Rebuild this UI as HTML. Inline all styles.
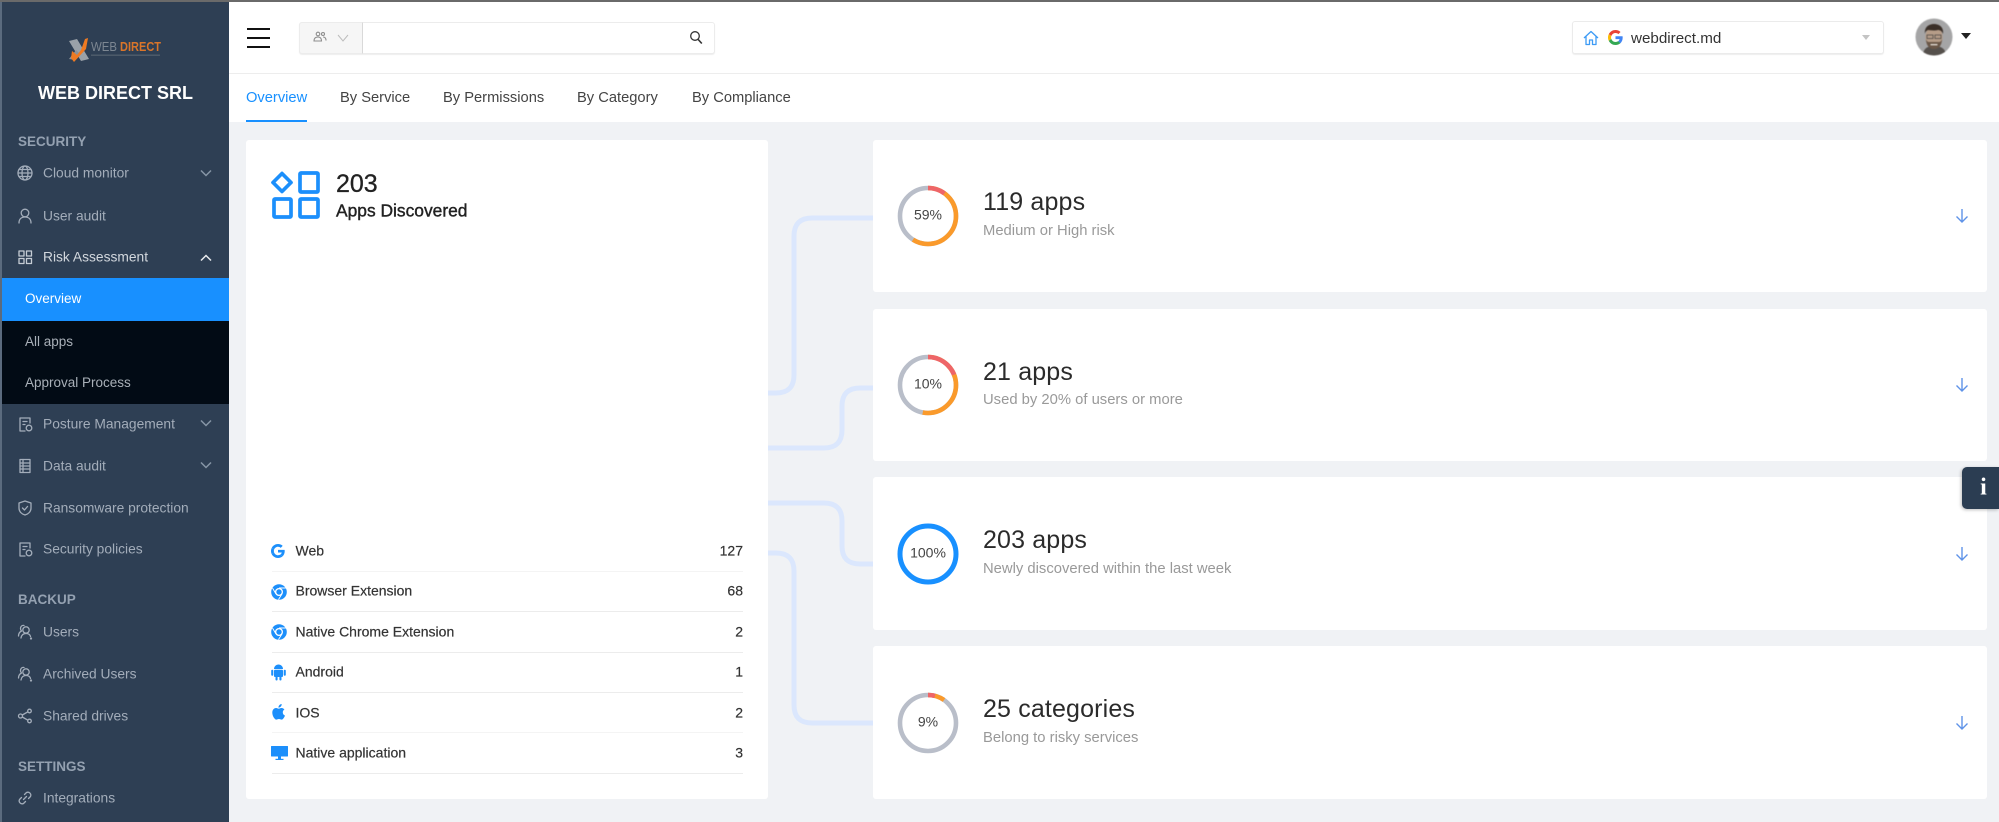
<!DOCTYPE html>
<html lang="en">
<head>
<meta charset="utf-8">
<title>Web Direct SRL</title>
<style>
*{box-sizing:border-box}
html{margin:0;padding:0;background:#f0f2f5}
body{margin:0;padding:0;width:1999px;height:822px;overflow:hidden;position:relative;background:#f0f2f5;font-family:"Liberation Sans",sans-serif;color:#333;filter:blur(.35px)}
.a{position:absolute}
.t{position:absolute;transform:translateY(-50%);white-space:nowrap;line-height:1.2}
#side{left:0;top:0;width:229px;height:822px;background:#2e3f54}
.g{left:18px;font-size:13.5px;font-weight:bold;color:#94a1b1;margin-top:.6px}
.m{left:43px;font-size:13.8px;color:#a3adba;margin-top:.6px}
.i{position:absolute;left:16px;width:18px;height:18px;fill:none;stroke:#a3adba;stroke-width:1.3;stroke-linecap:round;stroke-linejoin:round;transform:translateY(-50%)}
.c{position:absolute;left:200px;width:12px;height:8px;fill:none;stroke:#8695a6;stroke-width:1.5;transform:translateY(-50%)}
.tab{top:99px;font-size:14.7px;color:#444}
.card{position:absolute;background:#fff;border-radius:3px}
.rc{left:872.500px;width:1114.500px;height:153px}
.h{left:983px;font-size:25px;color:#2b2b2b;letter-spacing:.15px}
.s{left:983px;font-size:14.800px;color:#999;margin-top:2px}
.d{position:absolute;left:896px;width:64px;height:64px;transform:translateY(-50%) rotate(-90deg)}
.d circle{fill:none;stroke-width:4.6}
.p{left:888px;width:80px;text-align:center;font-size:14px;color:#444}
.l{left:295.5px;font-size:14px;color:#333;-webkit-text-stroke:.2px #333}
.n{right:1256px;font-size:14px;color:#333;-webkit-text-stroke:.2px #333}
.dv{left:272px;width:471px;height:1px;background:#ececec}
.ar{position:absolute;left:1955px;width:14px;height:16px;fill:none;stroke:#5f93e8;stroke-width:1.4;transform:translateY(-50%)}
.ic{position:absolute;fill:#1c8ffb;transform:translateY(-50%)}
</style>
</head>
<body>
<!-- top edge -->
<div class="a" style="left:0;top:0;width:1999px;height:2px;background:#6a6a6a;z-index:5"></div>
<!-- header -->
<div class="a" style="left:229px;top:0;width:1770px;height:122px;background:#fff"></div>
<div class="a" style="left:229px;top:73px;width:1770px;height:1px;background:#ededed"></div>

<!-- sidebar -->
<div id="side" class="a"></div>
<div class="a" style="left:0;top:0;width:1.500px;height:822px;background:#5b6b7e"></div>
<svg class="a" style="left:68px;top:36px" width="24" height="28" viewBox="0 0 24 28">
<polygon points="1,5 9,3 21,23 13,25" fill="#9aa1a8"/>
<polygon points="1,23 8,14 12,18 7,24" fill="#8a9198"/>
<polygon points="17,3 20,2 18,13 6,26 3,22 4,15 9,19 13,14" fill="#ee7a22"/>
</svg>
<svg class="a" style="left:90px;top:38px" width="72" height="22" viewBox="0 0 72 22">
<text x="1" y="13" font-family="Liberation Sans" font-size="13" fill="#7d8792" textLength="26" lengthAdjust="spacingAndGlyphs">WEB</text>
<text x="30" y="13" font-family="Liberation Sans" font-size="13" font-weight="bold" fill="#d9752a" textLength="41" lengthAdjust="spacingAndGlyphs">DIRECT</text>
<rect x="1" y="16.500" width="69" height="1.400" fill="#4f5d6c"/>
</svg>
<div class="t" style="left:38px;top:94px;font-size:18px;font-weight:bold;color:#fff">WEB DIRECT SRL</div>

<div class="t g" style="top:141px">SECURITY</div>
<svg class="i" style="top:173px" viewBox="0 0 18 18"><circle cx="9" cy="9" r="7"/><ellipse cx="9" cy="9" rx="3" ry="7"/><path d="M2 9h14M3 5.500h12M3 12.500h12"/></svg>
<div class="t m" style="top:173px">Cloud monitor</div>
<svg class="c" style="top:173px" viewBox="0 0 12 8"><path d="M1 1.500l5 5 5-5"/></svg>
<svg class="i" style="top:216px" viewBox="0 0 18 18"><circle cx="9" cy="6" r="3.800"/><path d="M3 16c0-4 2.500-6 6-6s6 2 6 6"/></svg>
<div class="t m" style="top:216px">User audit</div>
<svg class="i" style="top:257px;stroke:#c5ccd4" viewBox="0 0 18 18"><rect x="3" y="3" width="5" height="5"/><rect x="10.500" y="3" width="5" height="5"/><rect x="3" y="10.500" width="5" height="5"/><rect x="10.500" y="10.500" width="5" height="5"/></svg>
<div class="t m" style="top:257px;color:#d3d8de">Risk Assessment</div>
<svg class="c" style="top:258px;stroke:#e8ebee" viewBox="0 0 12 8"><path d="M1 6.500l5-5 5 5"/></svg>

<div class="a" style="left:2px;top:321px;width:227px;height:83px;background:#020b15"></div>
<div class="a" style="left:2px;top:278px;width:227px;height:43px;background:#1890ff"></div>
<div class="t" style="left:25px;top:299px;font-size:13.5px;color:#fff">Overview</div>
<div class="t" style="left:25px;top:341.500px;font-size:13.5px;color:#a9b0b8">All apps</div>
<div class="t" style="left:25px;top:383px;font-size:13.5px;color:#a9b0b8">Approval Process</div>

<svg class="i" style="top:424px" viewBox="0 0 18 18"><path d="M14 8V3H4v13h5"/><path d="M7 6.500h4M7 9.500h2"/><circle cx="13" cy="13" r="2.800"/></svg>
<div class="t m" style="top:424px">Posture Management</div>
<svg class="c" style="top:423px" viewBox="0 0 12 8"><path d="M1 1.500l5 5 5-5"/></svg>
<svg class="i" style="top:466px" viewBox="0 0 18 18"><rect x="4" y="2.500" width="10" height="13"/><path d="M4 6h10M4 9h10M4 12h10M7 2.500v13"/></svg>
<div class="t m" style="top:466px">Data audit</div>
<svg class="c" style="top:465px" viewBox="0 0 12 8"><path d="M1 1.500l5 5 5-5"/></svg>
<svg class="i" style="top:508px" viewBox="0 0 18 18"><path d="M9 2l6 2v5c0 3.500-2.500 6-6 7-3.500-1-6-3.500-6-7V4z"/><path d="M6.500 9l2 2 3-3.500"/></svg>
<div class="t m" style="top:508px">Ransomware protection</div>
<svg class="i" style="top:549px" viewBox="0 0 18 18"><path d="M14 8V3H4v13h5"/><path d="M7 6.500h4M7 9.500h2"/><circle cx="13" cy="13" r="2.800"/></svg>
<div class="t m" style="top:549px">Security policies</div>

<div class="t g" style="top:599px">BACKUP</div>
<svg class="i" style="top:632px" viewBox="0 0 18 18"><circle cx="10" cy="7" r="3.200"/><path d="M5 15c.5-3 2.500-4.500 5-4.500s4 1 4.500 3"/><path d="M8 2.500c-2-.5-3.500 1-3.500 3 0 1 .5 2 1 2.500-2 1-3 3-3 5"/><circle cx="15" cy="15.500" r=".5"/></svg>
<div class="t m" style="top:632px">Users</div>
<svg class="i" style="top:674px" viewBox="0 0 18 18"><circle cx="10" cy="7" r="3.200"/><path d="M5 15c.5-3 2.500-4.500 5-4.500s4 1 4.500 3"/><path d="M8 2.500c-2-.5-3.500 1-3.500 3 0 1 .5 2 1 2.500-2 1-3 3-3 5"/><circle cx="15" cy="15.500" r=".5"/></svg>
<div class="t m" style="top:674px">Archived Users</div>
<svg class="i" style="top:716px" viewBox="0 0 18 18"><circle cx="4.500" cy="9" r="2"/><circle cx="13.500" cy="4" r="1.800"/><circle cx="13.500" cy="14" r="1.800"/><path d="M6.300 8l5.600-3.200M6.300 10l5.600 3.200"/></svg>
<div class="t m" style="top:716px">Shared drives</div>

<div class="t g" style="top:766px">SETTINGS</div>
<svg class="i" style="top:798px" viewBox="0 0 18 18"><path d="M7.500 10.500l3-3"/><path d="M8.500 5.500l2-2a3 3 0 0 1 4 4l-2 2"/><path d="M9.500 12.500l-2 2a3 3 0 0 1-4-4l2-2"/></svg>
<div class="t m" style="top:798px">Integrations</div>

<!-- hamburger -->
<div class="a" style="left:247px;top:27.500px;width:23px;height:2px;background:#111"></div>
<div class="a" style="left:247px;top:36.500px;width:23px;height:2px;background:#111"></div>
<div class="a" style="left:247px;top:45.500px;width:23px;height:2px;background:#111"></div>

<!-- search -->
<div class="a" style="left:299px;top:22px;width:416px;height:32px;background:#fff;border:1px solid #ececec;border-radius:3px;box-shadow:0 1px 1px #eee"></div>
<div class="a" style="left:299px;top:22px;width:64px;height:32px;background:#f6f6f6;border:1px solid #ececec;border-right:1px solid #d9d9d9;border-radius:3px 0 0 3px"></div>
<svg class="a" style="left:313px;top:31px" width="14" height="12" viewBox="0 0 14 12" fill="none" stroke="#8d8d8d" stroke-width="1.100"><circle cx="5" cy="3" r="1.800"/><circle cx="10" cy="3" r="1.500"/><path d="M1 10c0-2.500 1.500-4 4-4s3.500 1.500 3.500 4zM10 6c2 0 3 1.500 3 3.500"/></svg>
<svg class="a" style="left:337px;top:34px" width="12" height="8" viewBox="0 0 12 8" fill="none" stroke="#bdbdbd" stroke-width="1"><path d="M1 1l5 6 5-6"/></svg>
<svg class="a" style="left:689px;top:30px" width="14" height="15" viewBox="0 0 14 15" fill="none" stroke="#333" stroke-width="1.300"><circle cx="6" cy="6" r="4.300"/><path d="M9.200 9.500l3.600 4" stroke-width="1.600"/></svg>

<!-- domain select -->
<div class="a" style="left:1572px;top:21px;width:312px;height:33px;background:#fff;border:1px solid #ebebeb;border-radius:3px;box-shadow:0 1px 1px #eee"></div>
<svg class="a" style="left:1583px;top:30px" width="16" height="16" viewBox="0 0 16 16" fill="none" stroke="#3d9bf5" stroke-width="1.300" stroke-linejoin="round"><path d="M1 8l7-6.500L15 8M3 6.500V14.500h3.500V10h3v4.500H13V6.500"/></svg>
<svg class="a" style="left:1608px;top:30px" width="15" height="15" viewBox="0 0 48 48"><path fill="#EA4335" d="M24 9.500c3.540 0 6.710 1.220 9.210 3.600l6.850-6.850C35.900 2.380 30.470 0 24 0 14.620 0 6.510 5.380 2.560 13.220l7.980 6.190C12.430 13.720 17.740 9.500 24 9.500z"/><path fill="#4285F4" d="M46.980 24.550c0-1.570-.15-3.090-.38-4.550H24v9.020h12.940c-.58 2.960-2.260 5.480-4.780 7.180l7.730 6c4.510-4.180 7.090-10.360 7.090-17.650z"/><path fill="#FBBC05" d="M10.530 28.590c-.48-1.450-.76-2.990-.76-4.590s.27-3.140.76-4.590l-7.980-6.190C.92 16.460 0 20.120 0 24c0 3.880.92 7.540 2.560 10.780l7.970-6.190z"/><path fill="#34A853" d="M24 48c6.480 0 11.930-2.130 15.890-5.810l-7.730-6c-2.150 1.450-4.920 2.300-8.160 2.300-6.260 0-11.570-4.220-13.470-9.910l-7.980 6.190C6.510 42.620 14.620 48 24 48z"/></svg>
<div class="t" style="left:1631px;top:38.500px;font-size:15.200px;color:#333">webdirect.md</div>
<div class="a" style="left:1862px;top:35px;width:0;height:0;border-left:4.500px solid transparent;border-right:4.500px solid transparent;border-top:5px solid #c4c4c4"></div>

<!-- avatar -->
<svg class="a" style="left:1915px;top:18px;filter:blur(.6px)" width="38" height="38" viewBox="0 0 38 38">
<defs><clipPath id="cp"><circle cx="19" cy="19" r="18.500"/></clipPath></defs>
<g clip-path="url(#cp)">
<rect width="38" height="38" fill="#a5a5a6"/>
<path d="M8 38c0-8 5-10 11-10s12 2 12 10z" fill="#55504c"/>
<ellipse cx="19" cy="19" rx="8.500" ry="11" fill="#b69d88"/>
<path d="M10 16c-1-7 4-10 9-10s10 3 9 10c-1-3-3-4-5-4-4 1-8 0-10 0-2 1-3 2-3 4z" fill="#3a2f28"/>
<path d="M11 21c1 3 2 3 4 3h8c2 0 3 0 4-3 0 6-3 10-8 10s-8-4-8-10z" fill="#6a5748"/>
<rect x="12" y="17" width="6" height="3.500" fill="none" stroke="#3f3f3f" stroke-width=".7"/>
<rect x="20" y="17" width="6" height="3.500" fill="none" stroke="#3f3f3f" stroke-width=".7"/>
<rect x="15.500" y="26" width="7" height="1.300" fill="#e8e2da"/>
</g></svg>
<div class="a" style="left:1961px;top:33px;width:0;height:0;border-left:5px solid transparent;border-right:5px solid transparent;border-top:6px solid #222"></div>

<!-- tabs -->
<div class="t tab" style="left:246px;color:#1890ff">Overview</div>
<div class="t tab" style="left:340px">By Service</div>
<div class="t tab" style="left:443px">By Permissions</div>
<div class="t tab" style="left:577px">By Category</div>
<div class="t tab" style="left:692px">By Compliance</div>
<div class="a" style="left:246px;top:120px;width:61px;height:2px;background:#1890ff"></div>

<!-- connectors -->
<svg class="a" style="left:768px;top:200px" width="105" height="540" viewBox="768 200 105 540" fill="none" stroke="#dbe7fd" stroke-width="5">
<path d="M873 218H812Q794 218 794 236V375Q794 393 776 393H768"/>
<path d="M873 388H860Q842 388 842 406V430Q842 448 824 448H768"/>
<path d="M768 503H824Q842 503 842 521V546Q842 564 860 564H873"/>
<path d="M768 553H776Q794 553 794 571V705Q794 723 812 723H873"/>
</svg>

<!-- left card -->
<div class="card" style="left:246px;top:140px;width:522px;height:659px"></div>
<svg class="a" style="left:269px;top:169px" width="52" height="52" viewBox="0 0 52 52" fill="none" stroke="#1c8ffb" stroke-width="3.700" stroke-linejoin="round">
<path d="M13 4.500L22 13.500L13 22.500L4 13.500Z"/>
<rect x="31" y="4" width="18" height="19" rx="1"/>
<rect x="5" y="30" width="17" height="18" rx="1"/>
<rect x="31" y="30" width="18" height="18" rx="1"/>
</svg>
<div class="t" style="left:336px;top:183.500px;font-size:25px;color:#222;-webkit-text-stroke:.3px #222">203</div>
<div class="t" style="left:336px;top:210.500px;font-size:17.400px;color:#222;-webkit-text-stroke:.4px #222">Apps Discovered</div>

<svg class="ic" style="left:271px;top:551px" width="14" height="15" viewBox="0 0 48 48"><path d="M24 9.500c3.540 0 6.710 1.220 9.210 3.600l6.850-6.850C35.900 2.380 30.470 0 24 0 14.620 0 6.510 5.380 2.560 13.220l7.980 6.190C12.430 13.720 17.740 9.500 24 9.500z"/><path d="M46.980 24.550c0-1.570-.15-3.090-.38-4.550H24v9.020h12.940c-.58 2.960-2.260 5.480-4.780 7.180l7.730 6c4.510-4.180 7.090-10.360 7.090-17.650z"/><path d="M10.530 28.590c-.48-1.450-.76-2.990-.76-4.590s.27-3.140.76-4.590l-7.980-6.190C.92 16.460 0 20.120 0 24c0 3.880.92 7.540 2.560 10.780l7.970-6.190z"/><path d="M24 48c6.480 0 11.930-2.130 15.890-5.810l-7.730-6c-2.150 1.450-4.920 2.300-8.160 2.300-6.260 0-11.570-4.220-13.470-9.910l-7.980 6.190C6.510 42.620 14.620 48 24 48z"/></svg>
<div class="t l" style="top:551px">Web</div><div class="t n" style="top:551px">127</div>
<div class="a dv" style="top:571px;background:#f4f4f4"></div>

<svg class="ic" style="left:271px;top:592px" width="16" height="16" viewBox="0 0 16 16"><circle cx="8" cy="8" r="7.800"/><circle cx="8" cy="8" r="4" fill="#fff"/><circle cx="8" cy="8" r="2.700"/><path d="M8 4H15M5 10L1.500 4M11 10L7.500 15.500" stroke="#fff" stroke-width=".9" fill="none"/></svg>
<div class="t l" style="top:591px">Browser Extension</div><div class="t n" style="top:591px">68</div>
<div class="a dv" style="top:611px"></div>

<svg class="ic" style="left:271px;top:632px" width="16" height="16" viewBox="0 0 16 16"><circle cx="8" cy="8" r="7.800"/><circle cx="8" cy="8" r="4" fill="#fff"/><circle cx="8" cy="8" r="2.700"/><path d="M8 4H15M5 10L1.500 4M11 10L7.500 15.500" stroke="#fff" stroke-width=".9" fill="none"/></svg>
<div class="t l" style="top:632px">Native Chrome Extension</div><div class="t n" style="top:632px">2</div>
<div class="a dv" style="top:652px"></div>

<svg class="ic" style="left:271px;top:672px" width="15" height="17" viewBox="0 0 15 17"><path d="M3 5.500C3 3 5 1 7.500 1S12 3 12 5.500z"/><rect x="3" y="6.200" width="9" height="7.300" rx="1"/><rect x=".2" y="6.200" width="2.100" height="6" rx="1"/><rect x="12.700" y="6.200" width="2.100" height="6" rx="1"/><rect x="4.500" y="13" width="2.100" height="4" rx="1"/><rect x="8.400" y="13" width="2.100" height="4" rx="1"/></svg>
<div class="t l" style="top:672px">Android</div><div class="t n" style="top:672px">1</div>
<div class="a dv" style="top:692px"></div>

<svg class="ic" style="left:270px;top:712px" width="16" height="17" viewBox="3 1 19 22"><path d="M18.700 12.600c0-2.500 2-3.700 2.100-3.800-1.200-1.700-3-1.900-3.600-2-1.500-.2-3 .9-3.800.9s-2-.9-3.300-.9c-1.700 0-3.300 1-4.100 2.500-1.800 3-.5 7.600 1.200 10.100.9 1.200 1.900 2.600 3.200 2.500 1.300 0 1.800-.8 3.300-.8s2 .8 3.300.8c1.400 0 2.200-1.200 3.100-2.500 1-1.400 1.400-2.800 1.400-2.900-.1 0-2.700-1-2.800-3.900zM16.200 4.900c.7-.8 1.200-2 1-3.200-1 0-2.300.7-3 1.500-.7.700-1.200 1.900-1.100 3.100 1.200.1 2.400-.6 3.100-1.400z"/></svg>
<div class="t l" style="top:712.500px">IOS</div><div class="t n" style="top:712.500px">2</div>
<div class="a dv" style="top:732px;background:#f4f4f4"></div>

<svg class="ic" style="left:271px;top:753px" width="17" height="14" viewBox="0 0 17 14"><rect width="17" height="10.500" rx=".5"/><rect x="7" y="10" width="3" height="3"/><rect x="4.500" y="12.800" width="8" height="1.200"/></svg>
<div class="t l" style="top:753px">Native application</div><div class="t n" style="top:753px">3</div>
<div class="a dv" style="top:773px"></div>

<!-- right cards -->
<div class="card rc" style="top:140px;height:152px"></div>
<div class="card rc" style="top:309px;height:152px"></div>
<div class="card rc" style="top:477px"></div>
<div class="card rc" style="top:646px"></div>

<svg class="d" style="top:216px" viewBox="0 0 64 64"><circle cx="32" cy="32" r="28" stroke="#b9bec9"/><circle cx="32" cy="32" r="28" stroke="#fa9a2b" pathLength="100" stroke-dasharray="59 100"/><circle cx="32" cy="32" r="28" stroke="#ee6568" pathLength="100" stroke-dasharray="10 100"/></svg>
<div class="t p" style="top:215px">59%</div>
<div class="t h" style="top:202px">119 apps</div>
<div class="t s" style="top:230px">Medium or High risk</div>
<svg class="ar" style="top:216px" viewBox="0 0 14 16"><path d="M7 1v13M1.500 8.500L7 14l5.500-5.500"/></svg>

<svg class="d" style="top:385px" viewBox="0 0 64 64"><circle cx="32" cy="32" r="28" stroke="#b9bec9"/><circle cx="32" cy="32" r="28" stroke="#fa9a2b" pathLength="100" stroke-dasharray="53 100"/><circle cx="32" cy="32" r="28" stroke="#ee6568" pathLength="100" stroke-dasharray="19 100"/></svg>
<div class="t p" style="top:384px">10%</div>
<div class="t h" style="top:372px">21 apps</div>
<div class="t s" style="top:399px">Used by 20% of users or more</div>
<svg class="ar" style="top:385px" viewBox="0 0 14 16"><path d="M7 1v13M1.500 8.500L7 14l5.500-5.500"/></svg>

<svg class="d" style="top:554px" viewBox="0 0 64 64"><circle cx="32" cy="32" r="28" stroke="#1890ff" style="stroke-width:5"/></svg>
<div class="t p" style="top:553px">100%</div>
<div class="t h" style="top:540px">203 apps</div>
<div class="t s" style="top:568px">Newly discovered within the last week</div>
<svg class="ar" style="top:554px" viewBox="0 0 14 16"><path d="M7 1v13M1.500 8.500L7 14l5.500-5.500"/></svg>

<svg class="d" style="top:723px" viewBox="0 0 64 64"><circle cx="32" cy="32" r="28" stroke="#b9bec9"/><circle cx="32" cy="32" r="28" stroke="#fa9a2b" pathLength="100" stroke-dasharray="9.700 100"/><circle cx="32" cy="32" r="28" stroke="#ee6568" pathLength="100" stroke-dasharray="4 100"/></svg>
<div class="t p" style="top:722px">9%</div>
<div class="t h" style="top:709px">25 categories</div>
<div class="t s" style="top:737px">Belong to risky services</div>
<svg class="ar" style="top:723px" viewBox="0 0 14 16"><path d="M7 1v13M1.500 8.500L7 14l5.500-5.500"/></svg>

<!-- info button -->
<div class="a" style="left:1962px;top:467px;width:37px;height:42px;background:#2b3d52;border-radius:5px 0 0 5px;box-shadow:-1px 1px 3px rgba(0,0,0,.25)"></div>
<div class="t" style="left:1962px;width:30px;top:488px;text-align:center;font:bold 24px 'Liberation Serif',serif;color:#fff;padding-left:13px">i</div>
</body>
</html>
